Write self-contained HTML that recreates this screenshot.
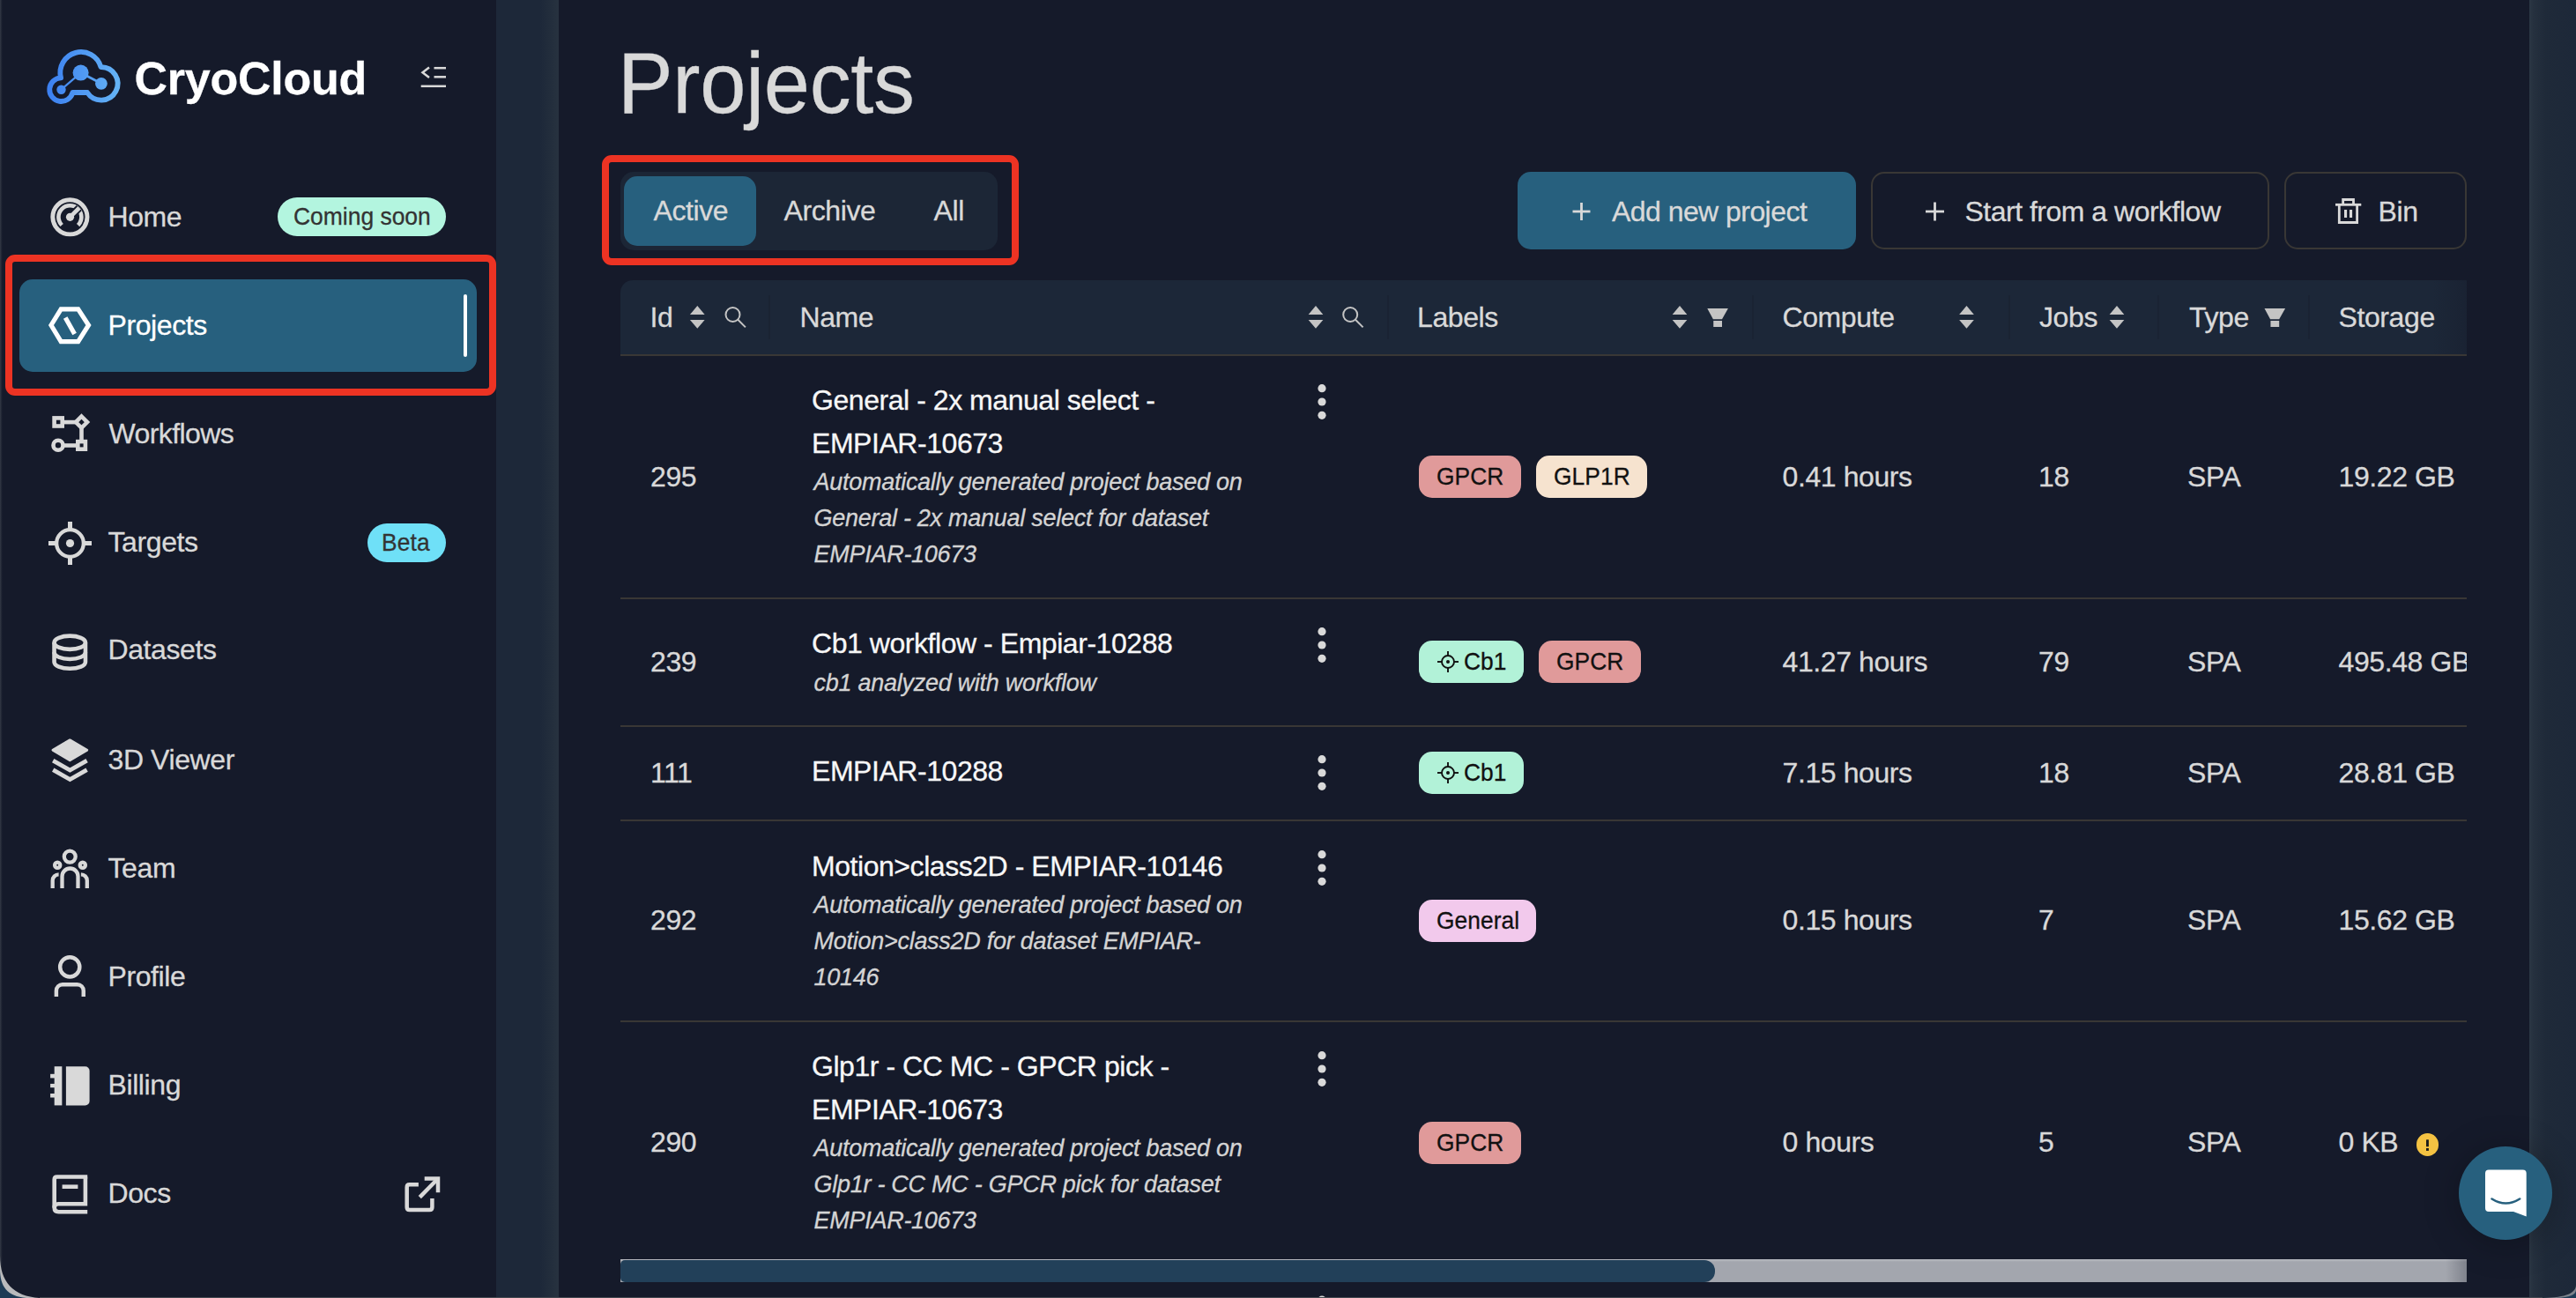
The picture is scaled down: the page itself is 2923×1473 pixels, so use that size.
<!DOCTYPE html>
<html><head><meta charset="utf-8"><style>
html,body{margin:0;padding:0;width:2923px;height:1473px;overflow:hidden;background:#151a2a;}
body{position:relative;font-family:"Liberation Sans", sans-serif;}
.t{position:absolute;white-space:nowrap;-webkit-text-stroke:0.3px currentColor;}
</style></head><body>
<div style="position:absolute;left:0px;top:0px;width:563px;height:1473px;background:#151a2a"></div><div style="position:absolute;left:0px;top:0px;width:3px;height:1473px;background:linear-gradient(90deg,#343a46,#1c2130 2px,rgba(22,26,41,0) 3px)"></div><div style="position:absolute;left:563px;top:0px;width:71px;height:1473px;background:linear-gradient(90deg,#1d2839 0px,#1d2839 50px,#27323f 71px)"></div><div style="position:absolute;left:634px;top:0px;width:2236px;height:1473px;background:#151a2a"></div><div style="position:absolute;left:2870px;top:0px;width:53px;height:1473px;background:linear-gradient(90deg,#2c3845 0px,#26313f 4px,#1f2a39 18px,#1d2839 53px)"></div><div class="t" style="left:152.50px;top:63.47px;font-size:52px;line-height:52px;color:#ffffff;font-weight:700;letter-spacing:-0.25px">CryoCloud</div><div style="position:absolute;left:6px;top:289px;width:557px;height:160px;box-sizing:border-box;border:8px solid #ec3323;border-radius:11px"></div><div style="position:absolute;left:22px;top:317px;width:519px;height:105px;background:#27607e;border-radius:15px"></div><div style="position:absolute;left:526px;top:334px;width:4px;height:71px;background:#fff;border-radius:2px"></div><div class="t" style="left:122.50px;top:229.91px;font-size:32px;line-height:32px;color:#d9d9d9;letter-spacing:-0.4px">Home</div><div class="t" style="left:122.50px;top:352.91px;font-size:32px;line-height:32px;color:#ffffff;letter-spacing:-0.4px">Projects</div><div class="t" style="left:123.50px;top:475.91px;font-size:32px;line-height:32px;color:#d9d9d9;letter-spacing:-0.6px">Workflows</div><div class="t" style="left:122.50px;top:599.31px;font-size:32px;line-height:32px;color:#d9d9d9;letter-spacing:-0.4px">Targets</div><div class="t" style="left:122.50px;top:721.41px;font-size:32px;line-height:32px;color:#d9d9d9;letter-spacing:-0.4px">Datasets</div><div class="t" style="left:122.50px;top:845.91px;font-size:32px;line-height:32px;color:#d9d9d9;letter-spacing:-0.4px">3D Viewer</div><div class="t" style="left:122.50px;top:969.31px;font-size:32px;line-height:32px;color:#d9d9d9;letter-spacing:-0.4px">Team</div><div class="t" style="left:122.50px;top:1092.21px;font-size:32px;line-height:32px;color:#d9d9d9;letter-spacing:-0.4px">Profile</div><div class="t" style="left:122.50px;top:1214.91px;font-size:32px;line-height:32px;color:#d9d9d9;letter-spacing:-0.4px">Billing</div><div class="t" style="left:122.50px;top:1337.91px;font-size:32px;line-height:32px;color:#d9d9d9;letter-spacing:-0.4px">Docs</div><div style="position:absolute;left:315px;top:224px;width:191px;height:44px;background:#b3f5df;border-radius:22px"></div><div class="t" style="left:332.80px;top:232.39px;font-size:28px;line-height:28px;color:#333;letter-spacing:0px;transform:scaleX(0.944);transform-origin:0 0">Coming soon</div><div style="position:absolute;left:417px;top:594px;width:89px;height:44px;background:#6fe0f7;border-radius:22px"></div><div class="t" style="left:433.00px;top:601.59px;font-size:28px;line-height:28px;color:#333;letter-spacing:0.2px;transform:scaleX(0.94);transform-origin:0 0">Beta</div><div class="t" style="left:701.00px;top:44.18px;font-size:99px;line-height:99px;color:#d9d9d9;letter-spacing:-0.3px;transform:scaleX(0.948);transform-origin:0 0">Projects</div><div style="position:absolute;left:683px;top:176px;width:473px;height:125px;box-sizing:border-box;border:8px solid #ec3323;border-radius:11px"></div><div style="position:absolute;left:704px;top:195px;width:428px;height:89px;background:#1c2636;border-radius:15px"></div><div style="position:absolute;left:708px;top:200px;width:150px;height:79px;background:#27607e;border-radius:15px"></div><div class="t" style="left:741.50px;top:222.71px;font-size:32px;line-height:32px;color:#d9d9d9;letter-spacing:-0.4px">Active</div><div class="t" style="left:889.50px;top:222.71px;font-size:32px;line-height:32px;color:#d9d9d9;letter-spacing:-0.4px">Archive</div><div class="t" style="left:1059.50px;top:222.71px;font-size:32px;line-height:32px;color:#d9d9d9;letter-spacing:-0.4px">All</div><div style="position:absolute;left:1722px;top:195px;width:384px;height:88px;background:#27607e;border-radius:15px"></div><div class="t" style="left:1829.00px;top:223.61px;font-size:32px;line-height:32px;color:#d9d9d9;letter-spacing:-0.55px">Add new project</div><div style="position:absolute;left:2123px;top:195px;width:452px;height:88px;box-sizing:border-box;border:2px solid #393735;border-radius:15px"></div><div class="t" style="left:2229.50px;top:223.61px;font-size:32px;line-height:32px;color:#d9d9d9;letter-spacing:-0.5px">Start from a workflow</div><div style="position:absolute;left:2592px;top:195px;width:207px;height:88px;box-sizing:border-box;border:2px solid #393735;border-radius:15px"></div><div class="t" style="left:2698.50px;top:223.61px;font-size:32px;line-height:32px;color:#d9d9d9;letter-spacing:-0.4px">Bin</div><div style="position:absolute;left:704px;top:318px;width:2095px;height:85px;background:#1c2738;border-top-left-radius:14px"></div><div style="position:absolute;left:2760px;top:318px;width:39px;height:85px;background:linear-gradient(90deg,rgba(22,26,41,0),rgba(22,26,41,0.35))"></div><div style="position:absolute;left:704px;top:402px;width:2095px;height:2px;background:#393735"></div><div style="position:absolute;left:872px;top:335px;width:2px;height:50px;background:#1a2333"></div><div style="position:absolute;left:1574px;top:335px;width:2px;height:50px;background:#1a2333"></div><div style="position:absolute;left:1987.5px;top:335px;width:2px;height:50px;background:#1a2333"></div><div style="position:absolute;left:2279px;top:335px;width:2px;height:50px;background:#1a2333"></div><div style="position:absolute;left:2448px;top:335px;width:2px;height:50px;background:#1a2333"></div><div style="position:absolute;left:2618.7px;top:335px;width:2px;height:50px;background:#1a2333"></div><div class="t" style="left:737.50px;top:344.41px;font-size:32px;line-height:32px;color:#d9d9d9;letter-spacing:-0.4px">Id</div><div class="t" style="left:907.50px;top:344.41px;font-size:32px;line-height:32px;color:#d9d9d9;letter-spacing:-0.4px">Name</div><div class="t" style="left:1608.00px;top:344.41px;font-size:32px;line-height:32px;color:#d9d9d9;letter-spacing:-0.4px">Labels</div><div class="t" style="left:2022.50px;top:344.41px;font-size:32px;line-height:32px;color:#d9d9d9;letter-spacing:-0.4px">Compute</div><div class="t" style="left:2314.00px;top:344.41px;font-size:32px;line-height:32px;color:#d9d9d9;letter-spacing:-0.4px">Jobs</div><div class="t" style="left:2484.00px;top:344.41px;font-size:32px;line-height:32px;color:#d9d9d9;letter-spacing:-0.4px">Type</div><div class="t" style="left:2653.50px;top:344.41px;font-size:32px;line-height:32px;color:#d9d9d9;letter-spacing:-0.4px">Storage</div><div style="position:absolute;left:704px;top:677.5px;width:2095px;height:2px;background:#393735"></div><div style="position:absolute;left:704px;top:823px;width:2095px;height:2px;background:#393735"></div><div style="position:absolute;left:704px;top:930px;width:2095px;height:2px;background:#393735"></div><div style="position:absolute;left:704px;top:1158px;width:2095px;height:2px;background:#393735"></div><div class="t" style="left:738.00px;top:524.91px;font-size:32px;line-height:32px;color:#d9d9d9;letter-spacing:-0.4px">295</div><div class="t" style="left:921.00px;top:437.91px;font-size:32px;line-height:32px;color:#f7f7f7;letter-spacing:-0.45px">General - 2x manual select -</div><div class="t" style="left:921.00px;top:486.91px;font-size:32px;line-height:32px;color:#f7f7f7;letter-spacing:-0.45px">EMPIAR-10673</div><div class="t" style="left:923.50px;top:534.14px;font-size:27px;line-height:27px;color:#d4d4d4;font-style:italic;letter-spacing:-0.27px">Automatically generated project based on</div><div class="t" style="left:923.50px;top:575.14px;font-size:27px;line-height:27px;color:#d4d4d4;font-style:italic;letter-spacing:-0.27px">General - 2x manual select for dataset</div><div class="t" style="left:923.50px;top:616.14px;font-size:27px;line-height:27px;color:#d4d4d4;font-style:italic;letter-spacing:-0.27px">EMPIAR-10673</div><div style="position:absolute;left:1610px;top:517px;width:116px;height:48px;background:#e09a9a;border-radius:15px"></div><div class="t" style="left:1629.50px;top:527.29px;font-size:28px;line-height:28px;color:#111;letter-spacing:0.1px;transform:scaleX(0.94);transform-origin:0 0">GPCR</div><div style="position:absolute;left:1743px;top:517px;width:126px;height:48px;background:#f6e3cf;border-radius:15px"></div><div class="t" style="left:1762.50px;top:527.29px;font-size:28px;line-height:28px;color:#111;letter-spacing:0.1px;transform:scaleX(0.94);transform-origin:0 0">GLP1R</div><div class="t" style="left:2022.50px;top:524.91px;font-size:32px;line-height:32px;color:#d9d9d9;letter-spacing:-0.4px">0.41 hours</div><div class="t" style="left:2313.00px;top:524.91px;font-size:32px;line-height:32px;color:#d9d9d9;letter-spacing:-0.4px">18</div><div class="t" style="left:2482.00px;top:524.91px;font-size:32px;line-height:32px;color:#d9d9d9;letter-spacing:-0.4px">SPA</div><div class="t" style="left:2653.50px;top:524.91px;font-size:32px;line-height:32px;color:#d9d9d9;letter-spacing:-0.4px">19.22 GB</div><div class="t" style="left:738.00px;top:734.61px;font-size:32px;line-height:32px;color:#d9d9d9;letter-spacing:-0.4px">239</div><div class="t" style="left:921.00px;top:713.91px;font-size:32px;line-height:32px;color:#f7f7f7;letter-spacing:-0.45px">Cb1 workflow - Empiar-10288</div><div class="t" style="left:923.50px;top:761.74px;font-size:27px;line-height:27px;color:#d4d4d4;font-style:italic;letter-spacing:-0.27px">cb1 analyzed with workflow</div><div style="position:absolute;left:1610px;top:727px;width:119px;height:48px;background:#b2f2d8;border-radius:15px"></div><div class="t" style="left:1660.50px;top:737.29px;font-size:28px;line-height:28px;color:#111;transform:scaleX(0.94);transform-origin:0 0">Cb1</div><div style="position:absolute;left:1746px;top:727px;width:116px;height:48px;background:#e09a9a;border-radius:15px"></div><div class="t" style="left:1765.50px;top:737.29px;font-size:28px;line-height:28px;color:#111;letter-spacing:0.1px;transform:scaleX(0.94);transform-origin:0 0">GPCR</div><div class="t" style="left:2022.50px;top:734.91px;font-size:32px;line-height:32px;color:#d9d9d9;letter-spacing:-0.4px">41.27 hours</div><div class="t" style="left:2313.00px;top:734.91px;font-size:32px;line-height:32px;color:#d9d9d9;letter-spacing:-0.4px">79</div><div class="t" style="left:2482.00px;top:734.91px;font-size:32px;line-height:32px;color:#d9d9d9;letter-spacing:-0.4px">SPA</div><div class="t" style="left:2653.50px;top:734.91px;font-size:32px;line-height:32px;color:#d9d9d9;letter-spacing:-0.4px">495.48 GB</div><div class="t" style="left:738.00px;top:860.51px;font-size:32px;line-height:32px;color:#d9d9d9;letter-spacing:-0.4px">111</div><div class="t" style="left:921.00px;top:859.41px;font-size:32px;line-height:32px;color:#f7f7f7;letter-spacing:-0.45px">EMPIAR-10288</div><div style="position:absolute;left:1610px;top:853px;width:119px;height:48px;background:#b2f2d8;border-radius:15px"></div><div class="t" style="left:1660.50px;top:863.29px;font-size:28px;line-height:28px;color:#111;transform:scaleX(0.94);transform-origin:0 0">Cb1</div><div class="t" style="left:2022.50px;top:860.51px;font-size:32px;line-height:32px;color:#d9d9d9;letter-spacing:-0.4px">7.15 hours</div><div class="t" style="left:2313.00px;top:860.51px;font-size:32px;line-height:32px;color:#d9d9d9;letter-spacing:-0.4px">18</div><div class="t" style="left:2482.00px;top:860.51px;font-size:32px;line-height:32px;color:#d9d9d9;letter-spacing:-0.4px">SPA</div><div class="t" style="left:2653.50px;top:860.51px;font-size:32px;line-height:32px;color:#d9d9d9;letter-spacing:-0.4px">28.81 GB</div><div class="t" style="left:738.00px;top:1027.91px;font-size:32px;line-height:32px;color:#d9d9d9;letter-spacing:-0.4px">292</div><div class="t" style="left:921.00px;top:966.51px;font-size:32px;line-height:32px;color:#f7f7f7;letter-spacing:-0.45px">Motion&gt;class2D - EMPIAR-10146</div><div class="t" style="left:923.50px;top:1014.14px;font-size:27px;line-height:27px;color:#d4d4d4;font-style:italic;letter-spacing:-0.27px">Automatically generated project based on</div><div class="t" style="left:923.50px;top:1055.14px;font-size:27px;line-height:27px;color:#d4d4d4;font-style:italic;letter-spacing:-0.27px">Motion&gt;class2D for dataset EMPIAR-</div><div class="t" style="left:923.50px;top:1096.14px;font-size:27px;line-height:27px;color:#d4d4d4;font-style:italic;letter-spacing:-0.27px">10146</div><div style="position:absolute;left:1610px;top:1021px;width:133px;height:48px;background:#f2c9ec;border-radius:15px"></div><div class="t" style="left:1629.50px;top:1031.29px;font-size:28px;line-height:28px;color:#111;letter-spacing:0.1px;transform:scaleX(0.94);transform-origin:0 0">General</div><div class="t" style="left:2022.50px;top:1027.91px;font-size:32px;line-height:32px;color:#d9d9d9;letter-spacing:-0.4px">0.15 hours</div><div class="t" style="left:2313.00px;top:1027.91px;font-size:32px;line-height:32px;color:#d9d9d9;letter-spacing:-0.4px">7</div><div class="t" style="left:2482.00px;top:1027.91px;font-size:32px;line-height:32px;color:#d9d9d9;letter-spacing:-0.4px">SPA</div><div class="t" style="left:2653.50px;top:1027.91px;font-size:32px;line-height:32px;color:#d9d9d9;letter-spacing:-0.4px">15.62 GB</div><div class="t" style="left:738.00px;top:1279.91px;font-size:32px;line-height:32px;color:#d9d9d9;letter-spacing:-0.4px">290</div><div class="t" style="left:921.00px;top:1193.51px;font-size:32px;line-height:32px;color:#f7f7f7;letter-spacing:-0.45px">Glp1r - CC MC - GPCR pick -</div><div class="t" style="left:921.00px;top:1242.51px;font-size:32px;line-height:32px;color:#f7f7f7;letter-spacing:-0.45px">EMPIAR-10673</div><div class="t" style="left:923.50px;top:1289.94px;font-size:27px;line-height:27px;color:#d4d4d4;font-style:italic;letter-spacing:-0.27px">Automatically generated project based on</div><div class="t" style="left:923.50px;top:1330.94px;font-size:27px;line-height:27px;color:#d4d4d4;font-style:italic;letter-spacing:-0.27px">Glp1r - CC MC - GPCR pick for dataset</div><div class="t" style="left:923.50px;top:1371.94px;font-size:27px;line-height:27px;color:#d4d4d4;font-style:italic;letter-spacing:-0.27px">EMPIAR-10673</div><div style="position:absolute;left:1610px;top:1273px;width:116px;height:48px;background:#e09a9a;border-radius:15px"></div><div class="t" style="left:1629.50px;top:1283.29px;font-size:28px;line-height:28px;color:#111;letter-spacing:0.1px;transform:scaleX(0.94);transform-origin:0 0">GPCR</div><div class="t" style="left:2022.50px;top:1279.91px;font-size:32px;line-height:32px;color:#d9d9d9;letter-spacing:-0.4px">0 hours</div><div class="t" style="left:2313.00px;top:1279.91px;font-size:32px;line-height:32px;color:#d9d9d9;letter-spacing:-0.4px">5</div><div class="t" style="left:2482.00px;top:1279.91px;font-size:32px;line-height:32px;color:#d9d9d9;letter-spacing:-0.4px">SPA</div><div class="t" style="left:2653.50px;top:1279.91px;font-size:32px;line-height:32px;color:#d9d9d9;letter-spacing:-0.4px">0 KB</div><div style="position:absolute;left:704px;top:1429px;width:2095px;height:26px;background:linear-gradient(180deg,#b9bcc2 0px,#a3a6ae 3px,#a3a6ae 26px)"></div><div style="position:absolute;left:2775px;top:1429px;width:24px;height:26px;background:linear-gradient(90deg,rgba(22,26,41,0),rgba(22,26,41,0.25))"></div><div style="position:absolute;left:704px;top:1430px;width:1242px;height:25px;background:#224059;border-radius:5px 12px 12px 5px"></div><div style="position:absolute;left:2799px;top:318px;width:71px;height:1111px;background:#151a2a"></div><div style="position:absolute;left:2790px;top:1301px;width:106px;height:106px;background:#27607e;border-radius:53px;box-shadow:0 4px 40px rgba(0,0,0,0.25)"></div><div style="position:absolute;left:2741.6px;top:1286.1px;width:25.6px;height:25.6px;background:#f4c242;border-radius:13px"></div>
<svg style="position:absolute;left:0;top:0" width="2923" height="1473" viewBox="0 0 2923 1473"><defs><linearGradient id="lg" x1="53" y1="0" x2="137" y2="0" gradientUnits="userSpaceOnUse"><stop offset="0" stop-color="#3b7ff0"/><stop offset="1" stop-color="#66b5f6"/></linearGradient></defs><path d="M82.4 105 A13.3 13.3 0 1 1 69.1 88.4 A23.5 23.5 0 0 1 114.45 76.07 A18.75 18.75 0 1 1 99.07 105 Z" fill="none" stroke="url(#lg)" stroke-width="5.8" stroke-linejoin="round"/><g fill="url(#lg)"><circle cx="91.6" cy="82.6" r="9"/><circle cx="69.5" cy="101.7" r="5.2"/><circle cx="114.9" cy="94.8" r="6.9"/></g><g stroke="url(#lg)" stroke-width="2.2"><line x1="69.5" y1="101.7" x2="91.6" y2="82.6"/><line x1="91.6" y1="82.6" x2="114.9" y2="94.8" stroke-width="2.8"/></g><g stroke="#d9d9d9" stroke-width="2.5" fill="none"><path d="M487 76.5 L479.5 82.2 L487 88"/><line x1="492.5" y1="77.2" x2="506" y2="77.2"/><line x1="492.5" y1="87.3" x2="506" y2="87.3"/><line x1="477.7" y1="97.8" x2="506" y2="97.8"/></g><g transform="translate(45,211)" fill="none" stroke="#d9d9d9"><circle cx="34.4" cy="35.3" r="19.6" stroke-width="4.9"/><path d="M25.2 44.5 A13 13 0 1 1 43.6 44.5" stroke-width="4.6"/><line x1="34.5" y1="35.3" x2="44.8" y2="25" stroke="#151a2a" stroke-width="8.5"/><line x1="34.5" y1="35.3" x2="44.8" y2="25" stroke-width="4.6"/><circle cx="34.5" cy="35.3" r="4.6" fill="#d9d9d9" stroke="none"/></g><g fill="none" stroke="#fff" stroke-width="5.2"><path d="M58 369 L69.2 350.8 H88.7 L100.5 369 L88.7 387.7 H69.2 Z" stroke-linejoin="miter"/><line x1="74.2" y1="360.5" x2="84.6" y2="379"/></g><g transform="translate(45,460)" fill="none" stroke="#d9d9d9" stroke-width="4.6"><rect x="16.6" y="14.4" width="9.1" height="9.1"/><path d="M47.5 12.5 L54 19.1 L47.5 25.6 L41 19.1 Z"/><line x1="28" y1="19.1" x2="41" y2="19.1"/><line x1="47.5" y1="25.6" x2="47.5" y2="39"/><rect x="43.3" y="41.1" width="8.6" height="8.6"/><circle cx="21" cy="45.3" r="5.5"/><line x1="26.5" y1="45.5" x2="43.3" y2="45.5"/></g><g transform="translate(45,581)" fill="none" stroke="#d9d9d9"><circle cx="34.5" cy="35.5" r="15.35" stroke-width="4.3"/><circle cx="34.5" cy="35.5" r="4.6" fill="#d9d9d9" stroke="none"/><g stroke-width="5"><line x1="34.5" y1="11" x2="34.5" y2="19"/><line x1="34.5" y1="52" x2="34.5" y2="60"/><line x1="10" y1="35.5" x2="18" y2="35.5"/><line x1="51" y1="35.5" x2="59" y2="35.5"/></g></g><g transform="translate(45,705)" fill="none" stroke="#d9d9d9" stroke-width="4.6"><ellipse cx="34.25" cy="24.25" rx="17.7" ry="7.65"/><path d="M16.55 24.25 V46.15 A17.7 7.65 0 0 0 51.95 46.15 V24.25"/><path d="M16.55 35.35 A17.7 7.65 0 0 0 51.95 35.35"/></g><g transform="translate(45,827)" fill="#d9d9d9" stroke="#d9d9d9" stroke-linejoin="round"><path d="M34.3 12.8 L53.8 24.3 L34.3 35.8 L14.9 24.3 Z" stroke-width="2.8"/><path d="M15.2 36.2 L34.4 47 L53.6 36.2" fill="none" stroke-width="4.8" stroke-linejoin="miter"/><path d="M15.2 46.7 L34.4 57.5 L53.6 46.7" fill="none" stroke-width="4.8" stroke-linejoin="miter"/></g><g transform="translate(45,950)" fill="none" stroke="#d9d9d9" stroke-width="4.3"><circle cx="34.25" cy="22.1" r="6.45"/><circle cx="20.2" cy="31.8" r="3.1"/><circle cx="48.8" cy="31.8" r="3.1"/><path d="M25.5 58 V44.5 A9 9 0 0 1 43.5 44.5 V58"/><path d="M21.6 42.35 A6.9 6.9 0 0 0 14.7 49.25 V58"/><path d="M46.9 42.35 A6.9 6.9 0 0 1 53.8 49.25 V58"/></g><g transform="translate(45,1073)" fill="none" stroke="#d9d9d9" stroke-width="4.45"><circle cx="34.25" cy="24.3" r="11.1"/><path d="M18.9 58 V51.2 A7 7 0 0 1 25.9 44.2 H42.75 A7 7 0 0 1 49.75 51.2 V58"/></g><g transform="translate(45,1197)" fill="#d9d9d9"><rect x="16.7" y="13.2" width="8.65" height="44.2"/><path d="M29.9 13.2 H51.7 A4.9 4.9 0 0 1 56.6 18.1 V52.5 A4.9 4.9 0 0 1 51.7 57.4 H29.9 Z"/><rect x="12.1" y="21.8" width="5" height="4.6"/><rect x="12.1" y="32.9" width="5" height="4.3"/><rect x="12.1" y="44" width="5" height="4.5"/></g><g transform="translate(45,1320)" fill="none" stroke="#d9d9d9" stroke-width="4.6"><path d="M54.2 15.5 H19.8 Q16.7 15.5 16.7 18.6 V50.5 Q16.7 55.25 21.5 55.25 H54.2"/><path d="M51.9 15.5 V46.25 H21 Q16.7 46.25 16.7 50.5"/><line x1="25.6" y1="26.7" x2="43.4" y2="26.7"/></g><g transform="translate(445,1320)" fill="none" stroke="#d9d9d9" stroke-width="4.5"><path d="M29.9 24.25 H19.7 Q16.7 24.25 16.7 27.25 V50 Q16.7 53 19.7 53 H42.4 Q45.4 53 45.4 50 V39.9"/><path d="M36.7 17.5 H52 V33.2"/><line x1="52" y1="17.5" x2="31.3" y2="38.6"/></g><g stroke="#d9d9d9" stroke-width="2.8"><line x1="1784.5" y1="240" x2="1804.5" y2="240"/><line x1="1794.5" y1="230" x2="1794.5" y2="250"/><line x1="2185" y1="240" x2="2206" y2="240"/><line x1="2195.5" y1="229.5" x2="2195.5" y2="250.5"/></g><g transform="translate(2640,220)" fill="none" stroke="#d9d9d9" stroke-width="2.8"><line x1="10" y1="12.3" x2="39.3" y2="12.3"/><path d="M18.65 12.3 V6.5 H30.5 V12.3"/><path d="M14.3 12.3 V32.5 H34.6 V12.3"/><g fill="#d9d9d9" stroke="none"><rect x="20" y="18" width="3.1" height="9"/><rect x="26" y="18" width="3.1" height="9"/></g></g><path d="M791.3 347 L799.65 356.9 L782.9499999999999 356.9 Z M782.9499999999999 362.95 L799.65 362.95 L791.3 372.85 Z" fill="#c4c4c4"/><path d="M1493 347 L1501.35 356.9 L1484.65 356.9 Z M1484.65 362.95 L1501.35 362.95 L1493 372.85 Z" fill="#c4c4c4"/><path d="M1906 347 L1914.35 356.9 L1897.65 356.9 Z M1897.65 362.95 L1914.35 362.95 L1906 372.85 Z" fill="#c4c4c4"/><path d="M2231.5 347 L2239.85 356.9 L2223.15 356.9 Z M2223.15 362.95 L2239.85 362.95 L2231.5 372.85 Z" fill="#c4c4c4"/><path d="M2402 347 L2410.35 356.9 L2393.65 356.9 Z M2393.65 362.95 L2410.35 362.95 L2402 372.85 Z" fill="#c4c4c4"/><path d="M1937.3 349.9 H1960.8999999999999 L1954.0 362.2 H1943.8999999999999 Z M1944.25 363.9 H1954.0 V370.9 H1944.25 Z" fill="#c4c4c4"/><path d="M2569.5 349.9 H2593.1 L2586.2 362.2 H2576.1 Z M2576.45 363.9 H2586.2 V370.9 H2576.45 Z" fill="#c4c4c4"/><g fill="none" stroke="#c4c4c4" stroke-width="2"><circle cx="831.5" cy="357" r="8"/><line x1="837.3" y1="362.8" x2="845.9" y2="371.4"/></g><g fill="none" stroke="#c4c4c4" stroke-width="2"><circle cx="1532.2" cy="357" r="8"/><line x1="1538.0" y1="362.8" x2="1546.6000000000001" y2="371.4"/></g><g fill="#d9d9d9"><circle cx="1500" cy="440.7" r="4.6"/><circle cx="1500" cy="456" r="4.6"/><circle cx="1500" cy="471.3" r="4.6"/></g><g fill="#d9d9d9"><circle cx="1500" cy="716.7" r="4.6"/><circle cx="1500" cy="732" r="4.6"/><circle cx="1500" cy="747.3" r="4.6"/></g><g fill="#d9d9d9"><circle cx="1500" cy="861.7" r="4.6"/><circle cx="1500" cy="877" r="4.6"/><circle cx="1500" cy="892.3" r="4.6"/></g><g fill="#d9d9d9"><circle cx="1500" cy="969.7" r="4.6"/><circle cx="1500" cy="985" r="4.6"/><circle cx="1500" cy="1000.3" r="4.6"/></g><g fill="#d9d9d9"><circle cx="1500" cy="1197.7" r="4.6"/><circle cx="1500" cy="1213" r="4.6"/><circle cx="1500" cy="1228.3" r="4.6"/></g><circle cx="1500" cy="1475" r="4.6" fill="#d9d9d9"/><g fill="none" stroke="#111" stroke-width="1.9"><circle cx="1643" cy="751" r="7"/><line x1="1643" y1="739" x2="1643" y2="744"/><line x1="1643" y1="758" x2="1643" y2="763"/><line x1="1631" y1="751" x2="1636" y2="751"/><line x1="1650" y1="751" x2="1655" y2="751"/><circle cx="1643" cy="751" r="2" fill="#111" stroke="none"/></g><g fill="none" stroke="#111" stroke-width="1.9"><circle cx="1643" cy="877" r="7"/><line x1="1643" y1="865" x2="1643" y2="870"/><line x1="1643" y1="884" x2="1643" y2="889"/><line x1="1631" y1="877" x2="1636" y2="877"/><line x1="1650" y1="877" x2="1655" y2="877"/><circle cx="1643" cy="877" r="2" fill="#111" stroke="none"/></g><g fill="#1b1b1b"><rect x="2753" y="1293.2" width="2.9" height="8" rx="0.5"/><rect x="2753" y="1303" width="2.9" height="2.9"/></g><path d="M2824 1327.6 H2862.7 Q2866.7 1327.6 2866.7 1331.6 V1380.6 L2852 1375 H2824 Q2820 1375 2820 1371 V1331.6 Q2820 1327.6 2824 1327.6 Z" fill="#fff"/><path d="M2827.5 1360.5 Q2843.3 1370.5 2859.2 1360.5" fill="none" stroke="#27607e" stroke-width="2.6" stroke-linecap="round"/><path d="M0 1425 C0 1455 15 1471 45 1473 L0 1473 Z" fill="#b9babc"/><path d="M0 1440 C0 1460 8 1471 30 1473 L0 1473 Z" fill="#1d3b55"/><rect x="45" y="1472" width="2840" height="1" fill="#454a52"/><path d="M2923 1458 C2923 1467 2913 1472.5 2885 1473 L2923 1473 Z" fill="#7d838b"/><path d="M2923 1464 C2923 1469 2916 1472.5 2900 1473 L2923 1473 Z" fill="#1d3b55"/></svg>
</body></html>
